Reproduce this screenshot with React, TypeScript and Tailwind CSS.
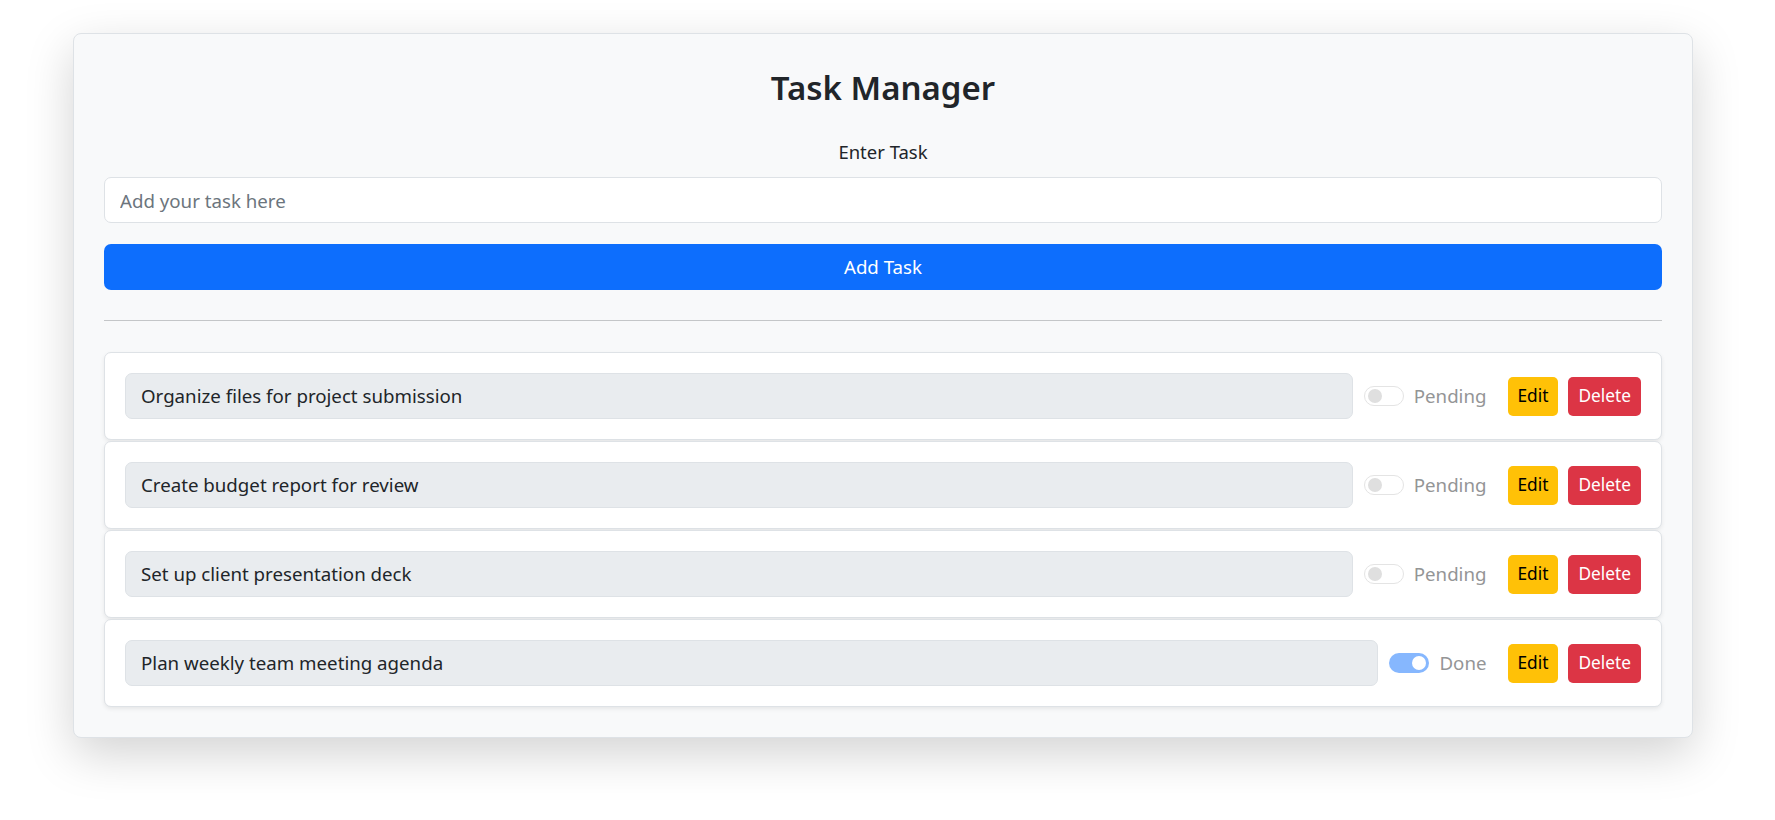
import { useState } from "react"

type Task = { id: number; text: string; done: boolean }

const initialTasks: Task[] = [
  { id: 1, text: "Organize files for project submission", done: false },
  { id: 2, text: "Create budget report for review", done: false },
  { id: 3, text: "Set up client presentation deck", done: false },
  { id: 4, text: "Plan weekly team meeting agenda", done: true },
]

function Switch({ on }: { on: boolean }) {
  return on ? (
    <span className="flex h-[20px] w-[40px] shrink-0 items-center justify-end rounded-full bg-[#86b7fe] pr-[3px]">
      <span className="h-[14px] w-[14px] rounded-full bg-white" />
    </span>
  ) : (
    <span className="flex h-[20px] w-[40px] shrink-0 items-center rounded-full border border-[#e4e4e4] bg-white pl-[3px]">
      <span className="h-[14px] w-[14px] rounded-full bg-[#dfdfdf]" />
    </span>
  )
}

function TaskRow({ task }: { task: Task }) {
  return (
    <div className="flex items-center rounded-[7px] border border-[#dee2e6] bg-white p-[20px] shadow-[0_2px_4px_rgba(0,0,0,0.075)]">
      <div className="flex h-[46px] flex-1 items-center rounded-[7px] border border-[#dee2e6] bg-[#e9ecef] px-[15px] text-[18.7px] text-[#212529]">
        {task.text}
      </div>
      <div className="ml-[11px] mr-[21px] flex items-center">
        <Switch on={task.done} />
        <span className="ml-[10px] text-[18.7px] leading-[30px] text-[#949596]">
          {task.done ? "Done" : "Pending"}
        </span>
      </div>
      <button className="h-[39px] rounded-[5px] bg-[#ffc107] px-[10px] text-[17.3px] text-black">
        Edit
      </button>
      <button className="ml-[10px] h-[39px] rounded-[5px] bg-[#dc3545] px-[10px] text-[17.3px] text-white">
        Delete
      </button>
    </div>
  )
}

export default function App() {
  const [tasks] = useState(initialTasks)

  return (
    <div className="min-h-screen bg-white pt-[33px] font-['Noto_Sans',sans-serif] text-[#212529]">
      <div className="ml-[73px] w-[1620px] rounded-[8px] border border-[#dee2e6] bg-[#f8f9fa] p-[30px] shadow-[0_16px_48px_rgba(0,0,0,0.175)]">
        <h2 className="mb-[25px] text-center text-[33px] font-semibold leading-[48px]">Task Manager</h2>

        <label className="mb-[10px] block text-center text-[18.5px] leading-[30px]">Enter Task</label>
        <input
          className="block h-[46px] w-full rounded-[7px] border border-[#dee2e6] bg-white px-[15px] text-[18.7px] outline-none placeholder:text-[#6c757d]"
          placeholder="Add your task here"
        />

        <button className="mt-[21px] h-[46px] w-full rounded-[7px] bg-[#0d6efd] text-[18.7px] text-white">
          Add Task
        </button>

        <hr className="mt-[30px] mb-[31px] border-t border-[#c4c6c8]" />

        <div className="flex flex-col gap-[1px]">
          {tasks.map((t) => (
            <TaskRow key={t.id} task={t} />
          ))}
        </div>
      </div>
    </div>
  )
}
